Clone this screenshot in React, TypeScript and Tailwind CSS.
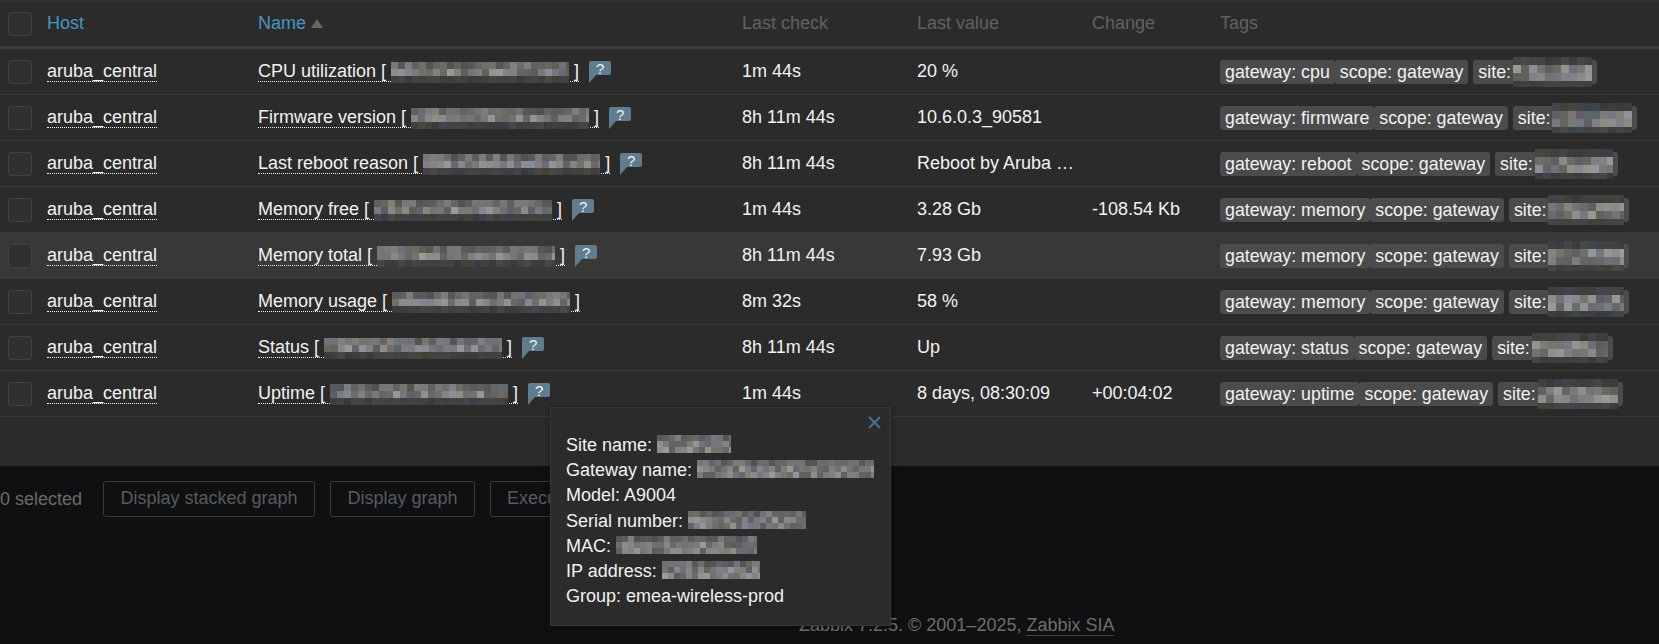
import React from "react";

const FONT = "[font-family:'Liberation_Sans',Arial,sans-serif]";

function rand(seed: number) {
  let s = seed;
  return () => {
    s = (s * 9301 + 49297) % 233280;
    return s / 233280;
  };
}

function gray(v: number, r: () => number) {
  const t = r();
  const a = t < 0.15 ? [4, 0, 10] : t < 0.4 ? [5, 5, -3] : t < 0.55 ? [-5, 3, 8] : [0, 0, 0];
  return `rgb(${v + a[0]},${v + a[1]},${v + a[2]})`;
}

type MosaicProps = { w: number; h?: number; seed: number; top?: number; cell?: number; kind?: "name" | "band" | "flat" };

function Mosaic({ w, h = 21, seed, top = -1, cell = 7, kind = "name" }: MosaicProps) {
  const r = rand(seed);
  const cols = Math.ceil(w / cell);
  const rows = Math.ceil(h / cell);
  const rects: React.ReactNode[] = [];
  for (let y = 0; y < rows; y++) {
    for (let x = 0; x < cols; x++) {
      const dim = (kind !== "flat" && y === rows - 1) || (kind === "band" && y === 0);
      const v = dim
        ? 58 + Math.floor(r() * 12)
        : y === 0
          ? 80 + Math.floor(r() * 46)
          : 92 + Math.floor(r() * 60);
      rects.push(<rect key={`${x}-${y}`} x={x * cell} y={y * cell} width={cell} height={cell} fill={gray(v, r)} />);
    }
  }
  return (
    <span className="relative inline-block h-px align-baseline" style={{ width: w }}>
      <svg
        className="absolute left-0"
        style={{ top: top - 13 }}
        width={w}
        height={h}
        viewBox={`0 0 ${w} ${h}`}
        shapeRendering="crispEdges"
      >
        {rects}
      </svg>
    </span>
  );
}

function Check() {
  return <div className="ml-2 h-6 w-6 rounded-[3px] border border-[#434343] bg-[#303030]" />;
}

function Help() {
  return (
    <span className="relative ml-[10px] inline-block h-[22px] w-[22px] shrink-0">
      <svg width="22" height="22" viewBox="0 0 22 22" className="absolute inset-0">
        <path d="M2 0H20Q22 0 22 2V12Q22 14 20 14H7L0 22V2Q0 0 2 0Z" fill="#5f7d8f" />
      </svg>
      <span className="absolute left-0 top-0 w-full text-center text-[15px] leading-[15px] text-[#f2f2f2]">?</span>
    </span>
  );
}

function Tag({ children, wide }: { children: React.ReactNode; wide?: boolean }) {
  return (
    <span className={`flex h-6 items-center whitespace-pre rounded-[3px] bg-[#4b4b4b] px-[5px] text-[17.8px] ${wide ? "mr-[5px]" : ""}`}>
      {children}
    </span>
  );
}

const rows = [
  { name: "CPU utilization [", blur: 178, help: true, check: "1m 44s", value: "20 %", change: "", tag: "cpu", site: 79, hover: false },
  { name: "Firmware version [", blur: 178, help: true, check: "8h 11m 44s", value: "10.6.0.3_90581", change: "", tag: "firmware", site: 80, hover: false },
  { name: "Last reboot reason [", blur: 177, help: true, check: "8h 11m 44s", value: "Reboot by Aruba …", change: "", tag: "reboot", site: 78, hover: false },
  { name: "Memory free [", blur: 178, help: true, check: "1m 44s", value: "3.28 Gb", change: "-108.54 Kb", tag: "memory", site: 76, hover: false },
  { name: "Memory total [", blur: 178, help: true, check: "8h 11m 44s", value: "7.93 Gb", change: "", tag: "memory", site: 76, hover: true },
  { name: "Memory usage [", blur: 178, help: false, check: "8m 32s", value: "58 %", change: "", tag: "memory", site: 76, hover: false },
  { name: "Status [", blur: 178, help: true, check: "8h 11m 44s", value: "Up", change: "", tag: "status", site: 76, hover: false },
  { name: "Uptime [", blur: 178, help: true, check: "1m 44s", value: "8 days, 08:30:09", change: "+00:04:02", tag: "uptime", site: 80, hover: false },
];

const GRID = "grid grid-cols-[47px_211px_484px_175px_175px_128px_1fr] items-center";

const popupLines: { label: string; blur?: [number, number] }[] = [
  { label: "Site name:", blur: [74, 11] },
  { label: "Gateway name:", blur: [177, 12] },
  { label: "Model: A9004" },
  { label: "Serial number:", blur: [118, 13] },
  { label: "MAC:", blur: [141, 14] },
  { label: "IP address:", blur: [98, 15] },
  { label: "Group: emea-wireless-prod" },
];

const buttons = [
  { label: "Display stacked graph", w: "w-[212px]" },
  { label: "Display graph", w: "w-[145px]" },
  { label: "Execute now", w: "w-[137px]" },
];

export default function App() {
  return (
    <div className={`relative h-[644px] w-[1659px] overflow-hidden bg-[#0e1012] text-[18px] text-[#f2f2f2] ${FONT}`}>
      <div className="h-[466px] border-t border-[#333333] bg-[#2b2b2b]">
        <div className={`${GRID} h-[45px] text-[#5f6265]`}>
          <Check />
          <span className="text-[#4796c4]">Host</span>
          <span className="flex items-center text-[#4796c4]">
            Name
            <svg width="12" height="9" viewBox="0 0 12 9" className="ml-[5px]">
              <path d="M6 0L12 9H0Z" fill="#666666" />
            </svg>
          </span>
          <span>Last check</span>
          <span>Last value</span>
          <span>Change</span>
          <span>Tags</span>
        </div>
        <div className="h-[3px] bg-[#3b3b3b]" />
        {rows.map((row, i) => (
          <div
            key={row.name}
            className={`${GRID} h-[46px] border-b border-[#383838] ${row.hover ? "bg-[#383838]" : ""}`}
          >
            <Check />
            <span>
              <span className="border-b border-dotted border-[#f2f2f2]">aruba_central</span>
            </span>
            <span className="flex items-center">
              <span className="whitespace-nowrap">
                <span className="border-b border-dotted border-[#f2f2f2]">
                  {row.name} <Mosaic w={row.blur} seed={17 + i * 37} /> ]
                </span>
              </span>
              {row.help && <Help />}
            </span>
            <span>{row.check}</span>
            <span className="whitespace-nowrap">{row.value}</span>
            <span>{row.change}</span>
            <span className="flex pt-px">
              <Tag>gateway: {row.tag}</Tag>
              <Tag wide>scope: gateway</Tag>
              <Tag>
                {"site: "}
                <span className="-ml-[3px] flex">
                  <Mosaic w={row.site} h={30} top={-2} cell={8} kind="band" seed={91 + i * 23} />
                </span>
              </Tag>
            </span>
          </div>
        ))}
      </div>

      <div className="flex items-center pt-[15px] text-[#6b6b6b]">
        <span className="mr-[21px]">0 selected</span>
        <div className="flex gap-[15px] text-[#585b5e]">
          {buttons.map((b) => (
            <span key={b.label} className={`flex h-9 items-center justify-center whitespace-nowrap rounded-[3px] border border-[#383b3e] pb-px ${b.w}`}>
              {b.label}
            </span>
          ))}
        </div>
      </div>

      <div className="pl-[799px] pt-[95px] text-[#6d6d6d]">
        Zabbix 7.2.5. © 2001–2025, <span className="border-b border-[#444444]">Zabbix SIA</span>
      </div>

      <div className="absolute left-[550px] top-[407px] h-[219px] w-[341px] border border-[#383838] bg-[#2b2b2b] pl-[15px] pt-[25px] leading-[25.2px] shadow-[0_0_6px_rgba(0,0,0,0.35)]">
        <svg width="13" height="13" viewBox="0 0 13 13" className="absolute right-[9px] top-[8px]">
          <path d="M1 1L12 12M12 1L1 12" stroke="#4a7088" strokeWidth="2" fill="none" />
        </svg>
        {popupLines.map((l) => (
          <div key={l.label} className="whitespace-nowrap">
            {l.label}
            {l.blur && (
              <>
                {" "}
                <Mosaic w={l.blur[0]} h={18} top={-2} cell={6} kind="flat" seed={l.blur[1] * 41} />
              </>
            )}
          </div>
        ))}
      </div>
    </div>
  );
}
